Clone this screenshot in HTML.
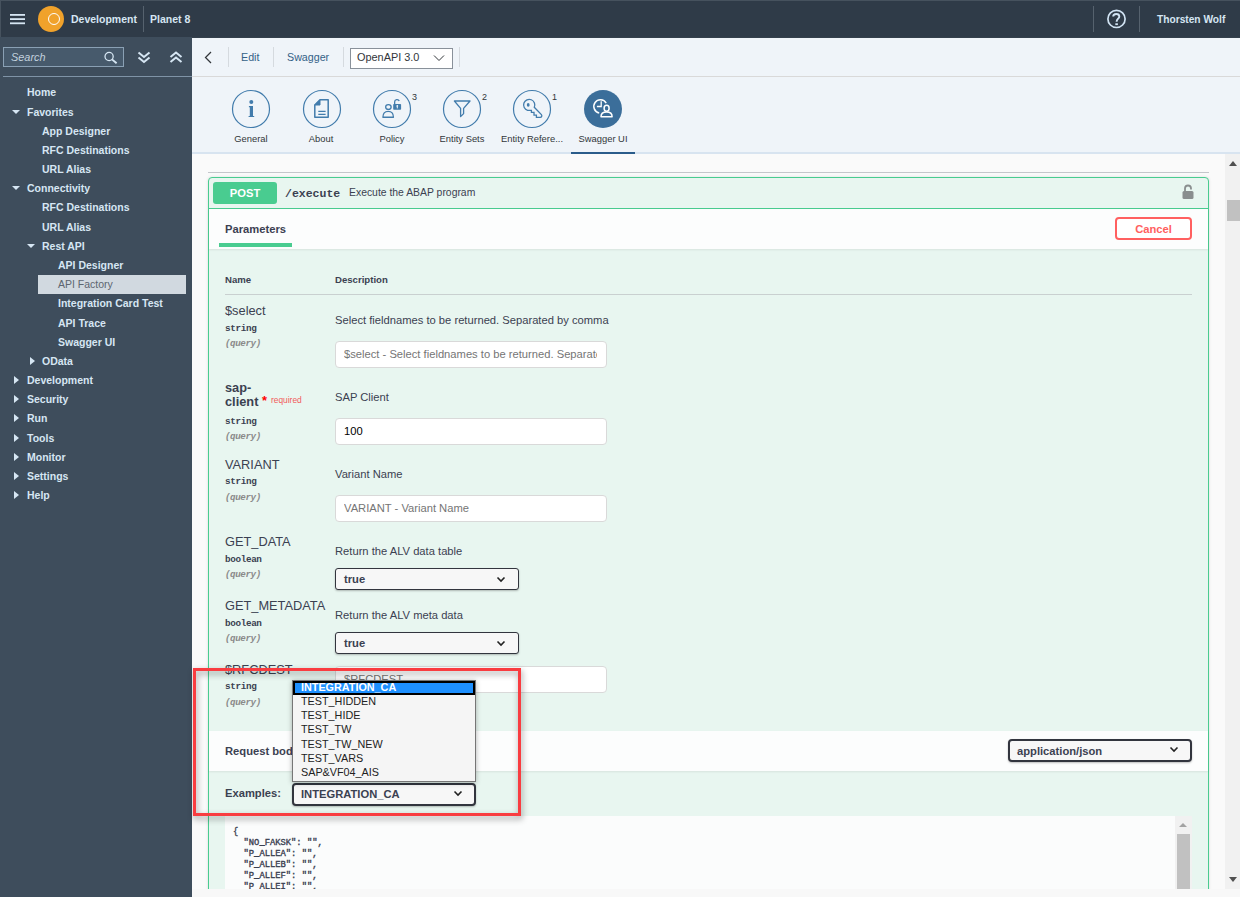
<!DOCTYPE html>
<html><head><meta charset="utf-8">
<style>
*{margin:0;padding:0;box-sizing:border-box}
html,body{width:1240px;height:897px;overflow:hidden;background:#fafafa;font-family:"Liberation Sans",sans-serif}
.a{position:absolute;white-space:nowrap}
#hdr{position:absolute;left:0;top:0;width:1240px;height:37px;background:#2f3b48;border-top:1px solid #46525e}
#side{position:absolute;left:0;top:37px;width:192px;height:860px;background:#3e4d5c}
.hw{color:#d6e6f3;font-size:10.5px;font-weight:bold}
.sep{position:absolute;width:1px;background:#56626e}
.tr{color:#d6e6f3;font-size:10.5px;font-weight:bold;line-height:19px;height:19px}
.tri-d{position:absolute;width:0;height:0;border-left:4.7px solid transparent;border-right:4.7px solid transparent;border-top:4.5px solid #d6e6f3}
.tri-r{position:absolute;width:0;height:0;border-top:4px solid transparent;border-bottom:4px solid transparent;border-left:5.5px solid #d6e6f3}
#tb{position:absolute;left:192px;top:37px;width:1048px;height:117px;background:#eff4f9}
.tsep{position:absolute;width:1px;background:#d5dadf;top:47px;height:20px}
.tab{position:absolute;top:90px;width:38px;height:38px;border:1px solid #427cac;border-radius:50%}
.tlab{position:absolute;top:133px;font-size:9.4px;color:#32363a;text-align:center;width:80px}
.badge{position:absolute;top:92px;font-size:9px;color:#32363a}
.sw{color:#3b4151}
.pn{font-size:12.8px;color:#3b4151}
.pt{font-family:"Liberation Mono",monospace;font-size:9.3px;letter-spacing:-0.35px;font-weight:bold;color:#3b4151}
.pq{font-family:"Liberation Mono",monospace;font-size:9.2px;letter-spacing:-0.4px;font-style:italic;font-weight:bold;color:#8a8a8a}
.pd{font-size:11.2px;color:#3b4151}
.inp{position:absolute;left:335px;width:272px;height:27px;background:#fff;border:1px solid #d9d9d9;border-radius:4px}
.sel{position:absolute;background:#f7f7f7;border:2px solid #32353e;border-radius:4px;box-shadow:0 1px 2px rgba(0,0,0,.25)}
</style></head><body>

<!-- header -->
<div id="hdr"></div>
<div class="a" style="left:0;top:0;width:1px;height:37px;background:#46525e"></div>
<svg class="a" style="left:10px;top:13px" width="15" height="12" viewBox="0 0 15 12"><rect x="0" y="1" width="15" height="1.8" fill="#d6e6f3"/><rect x="0" y="5.2" width="15" height="1.8" fill="#d6e6f3"/><rect x="0" y="9.4" width="15" height="1.8" fill="#d6e6f3"/></svg>
<div class="a" style="left:38px;top:6px;width:26px;height:26px;border-radius:50%;background:#f0a22b"></div>
<div class="a" style="left:48px;top:13px;width:12px;height:12px;border-radius:50%;border:1px solid #fff"></div>
<div class="a hw" style="left:71px;top:13px">Development</div>
<div class="sep" style="left:143px;top:6px;height:26px"></div>
<div class="a hw" style="left:150px;top:13px">Planet 8</div>
<div class="sep" style="left:1093px;top:6px;height:26px"></div>
<svg class="a" style="left:1106px;top:9px" width="21" height="21" viewBox="0 0 21 21"><circle cx="10.5" cy="9.9" r="8.6" fill="none" stroke="#d1e3f3" stroke-width="1.7"/><path d="M7.2 7.6 C7.2 5.8 8.5 5 10.3 5 C12.1 5 13.3 6.1 13.3 7.5 C13.3 9.6 10.6 9.9 10.6 12.8" fill="none" stroke="#d1e3f3" stroke-width="1.9"/><rect x="9.3" y="14.3" width="2.6" height="1.8" fill="#d1e3f3"/></svg>
<div class="sep" style="left:1139px;top:6px;height:26px"></div>
<div class="a hw" style="left:1157px;top:14px;font-size:10.2px">Thorsten Wolf</div>

<!-- sidebar -->
<div id="side"></div>
<div class="a" style="left:3px;top:47px;width:121px;height:20px;background:#475a6c;border:1px solid #8aa0b4"></div>
<div class="a" style="left:11px;top:51px;font-size:10.9px;font-style:italic;color:#c3d2df">Search</div>
<svg class="a" style="left:104px;top:50px" width="14" height="14" viewBox="0 0 14 14"><circle cx="5.1" cy="6.5" r="4.1" fill="none" stroke="#d6e6f3" stroke-width="1.3"/><line x1="8" y1="9.4" x2="12.6" y2="13.3" stroke="#d6e6f3" stroke-width="1.9"/></svg>
<svg class="a" style="left:137px;top:51px" width="14" height="13" viewBox="0 0 14 13"><polyline points="1.5,1.5 7,6 12.5,1.5" fill="none" stroke="#d6e6f3" stroke-width="2"/><polyline points="1.5,6.5 7,11 12.5,6.5" fill="none" stroke="#d6e6f3" stroke-width="2"/></svg>
<svg class="a" style="left:169px;top:51px" width="14" height="13" viewBox="0 0 14 13"><polyline points="1.5,6 7,1.5 12.5,6" fill="none" stroke="#d6e6f3" stroke-width="2"/><polyline points="1.5,11 7,6.5 12.5,11" fill="none" stroke="#d6e6f3" stroke-width="2"/></svg>
<div class="a" style="left:3px;top:76px;width:189px;height:1px;background:#7f93a6"></div>
<!-- tree -->
<div class="a tr" style="left:27px;top:83.46px">Home</div>
<div class="tri-d" style="left:11.7px;top:109.5px"></div>
<div class="a tr" style="left:27px;top:102.63px">Favorites</div>
<div class="a tr" style="left:42px;top:121.80px">App Designer</div>
<div class="a tr" style="left:42px;top:140.97px">RFC Destinations</div>
<div class="a tr" style="left:42px;top:160.14px">URL Alias</div>
<div class="tri-d" style="left:11.7px;top:186.1px"></div>
<div class="a tr" style="left:27px;top:179.31px">Connectivity</div>
<div class="a tr" style="left:42px;top:198.48px">RFC Destinations</div>
<div class="a tr" style="left:42px;top:217.65px">URL Alias</div>
<div class="tri-d" style="left:26.7px;top:243.7px"></div>
<div class="a tr" style="left:42px;top:236.82px">Rest API</div>
<div class="a tr" style="left:58px;top:255.99px">API Designer</div>
<div class="a" style="left:38px;top:275px;width:148px;height:19px;background:#d1d9e0"></div>
<div class="a tr" style="left:58px;top:275.16px;font-weight:normal;color:#5d6670">API Factory</div>
<div class="a tr" style="left:58px;top:294.33px">Integration Card Test</div>
<div class="a tr" style="left:58px;top:313.50px">API Trace</div>
<div class="a tr" style="left:58px;top:332.67px">Swagger UI</div>
<div class="tri-r" style="left:30px;top:356.8px"></div>
<div class="a tr" style="left:42px;top:351.84px">OData</div>
<div class="tri-r" style="left:14px;top:375.9px"></div>
<div class="a tr" style="left:27px;top:371.01px">Development</div>
<div class="tri-r" style="left:14px;top:395.1px"></div>
<div class="a tr" style="left:27px;top:390.18px">Security</div>
<div class="tri-r" style="left:14px;top:414.3px"></div>
<div class="a tr" style="left:27px;top:409.35px">Run</div>
<div class="tri-r" style="left:14px;top:433.5px"></div>
<div class="a tr" style="left:27px;top:428.52px">Tools</div>
<div class="tri-r" style="left:14px;top:452.6px"></div>
<div class="a tr" style="left:27px;top:447.69px">Monitor</div>
<div class="tri-r" style="left:14px;top:471.8px"></div>
<div class="a tr" style="left:27px;top:466.86px">Settings</div>
<div class="tri-r" style="left:14px;top:491.0px"></div>
<div class="a tr" style="left:27px;top:486.03px">Help</div>

<!-- toolbar -->
<div id="tb"></div>
<div class="a" style="left:192px;top:37px;width:1048px;height:1px;background:#34404c"></div>
<div class="a" style="left:192px;top:76px;width:1048px;height:1px;background:#d9d9d9"></div>
<svg class="a" style="left:203px;top:51px" width="10" height="13" viewBox="0 0 10 13"><polyline points="8,1 2.5,6.5 8,12" fill="none" stroke="#32363a" stroke-width="1.25"/></svg>
<div class="tsep" style="left:228px"></div>
<div class="a" style="left:241px;top:51px;font-size:10.7px;color:#346187">Edit</div>
<div class="tsep" style="left:273px"></div>
<div class="a" style="left:287px;top:51px;font-size:10.7px;color:#346187">Swagger</div>
<div class="tsep" style="left:343px"></div>
<div class="a" style="left:350px;top:48px;width:103px;height:21px;background:#fff;border:1px solid #89919a"></div>
<div class="a" style="left:357px;top:51px;font-size:10.9px;color:#32363a">OpenAPI 3.0</div>
<svg class="a" style="left:433px;top:54px" width="12" height="8" viewBox="0 0 12 8"><polyline points="1,1.5 6,6.5 11,1.5" fill="none" stroke="#32363a" stroke-width="1"/></svg>
<div class="tsep" style="left:459px"></div>

<svg class="a" style="left:231px;top:89px" width="40" height="40" viewBox="0 0 40 40"><circle cx="20" cy="20" r="18.5" fill="none" stroke="#427cac" stroke-width="1.2"/><circle cx="20.3" cy="13" r="2" fill="#427cac"/><path d="M17.9 17 H22 V26.9 H23.2 V28.1 H17.6 V26.9 H18.8 V18.2 H17.9 Z" fill="#427cac"/></svg>
<div class="tlab" style="left:211px">General</div>
<svg class="a" style="left:301.5px;top:89px" width="40" height="40" viewBox="0 0 40 40"><circle cx="20" cy="20" r="18.5" fill="none" stroke="#427cac" stroke-width="1.2"/><path d="M18 10.8 H26.2 V28.3 H12.8 V16 Z" fill="none" stroke="#427cac" stroke-width="1.5" stroke-linejoin="round"/><path d="M12.8 16 L18 10.8 V16 Z" fill="#427cac" stroke="#427cac" stroke-width="1"/><path d="M16.3 22.4 H23.6 M16.3 25.4 H23.6" stroke="#427cac" stroke-width="1.2"/></svg>
<div class="tlab" style="left:281px">About</div>
<svg class="a" style="left:372px;top:89px" width="40" height="40" viewBox="0 0 40 40"><circle cx="20" cy="20" r="18.5" fill="none" stroke="#427cac" stroke-width="1.2"/><ellipse cx="16.4" cy="18" rx="2.75" ry="2.45" fill="none" stroke="#427cac" stroke-width="1.3"/><path d="M10.9 28.25 C10.9 24 13.3 22.3 16.2 22.3 C19.1 22.3 21.45 24 21.45 28.25 Z" fill="none" stroke="#427cac" stroke-width="1.3" stroke-linejoin="round"/><path d="M22.65 15.3 V13 A2.35 2.35 0 0 1 27.2 12.1" fill="none" stroke="#427cac" stroke-width="1.3"/><rect x="21.2" y="15" width="7.9" height="5.7" rx="0.8" fill="#427cac"/><circle cx="25.3" cy="16.9" r="0.9" fill="#eff4f9"/><rect x="24.8" y="17.2" width="1" height="2.2" fill="#eff4f9"/></svg>
<div class="tlab" style="left:352px">Policy</div>
<div class="badge" style="left:412px">3</div>
<svg class="a" style="left:442px;top:89px" width="40" height="40" viewBox="0 0 40 40"><circle cx="20" cy="20" r="18.5" fill="none" stroke="#427cac" stroke-width="1.2"/><path d="M12.4 12 H28 L21.6 19.4 V24.6 L18.6 27.6 V19.4 Z" fill="none" stroke="#427cac" stroke-width="1.3" stroke-linejoin="round"/></svg>
<div class="tlab" style="left:422px">Entity Sets</div>
<div class="badge" style="left:482px">2</div>
<svg class="a" style="left:512px;top:89px" width="40" height="40" viewBox="0 0 40 40"><circle cx="20" cy="20" r="18.5" fill="none" stroke="#427cac" stroke-width="1.2"/><path d="M22.3 18.3 A5.6 5.6 0 1 0 15.6 21.3 L19.4 21.3 L19.4 23.4 L22 23.4 L22 26.2 L24.4 26.2 L24.4 28.4 L28.2 28.4 A1.7 1.7 0 0 0 29.4 25.6 Z" fill="none" stroke="#427cac" stroke-width="1.3" stroke-linejoin="miter"/><ellipse cx="16.2" cy="15.9" rx="1.4" ry="1.8" fill="#427cac"/></svg>
<div class="tlab" style="left:492px">Entity Refere...</div>
<div class="badge" style="left:552px">1</div>
<svg class="a" style="left:583px;top:89px" width="40" height="40" viewBox="0 0 40 40"><circle cx="20" cy="20" r="19" fill="#3b6e9a"/><path d="M23.2 14.2 A6.6 6.6 0 1 0 16.2 23.9" fill="none" stroke="#fff" stroke-width="1.5"/><path d="M18.2 12.2 V17.5 H13.9" fill="none" stroke="#fff" stroke-width="1.3"/><ellipse cx="23.6" cy="19.2" rx="2.5" ry="3" fill="none" stroke="#fff" stroke-width="1.5"/><path d="M18 27.7 C18 24.6 20.4 23 23.6 23 C26.8 23 29.1 24.6 29.1 27.7 Z" fill="none" stroke="#fff" stroke-width="1.5" stroke-linejoin="round"/></svg>
<div class="tlab" style="left:563px">Swagger UI</div>
<div class="a" style="left:192px;top:152px;width:1048px;height:2px;background:#d8e4f0"></div>
<div class="a" style="left:571px;top:152px;width:64px;height:2px;background:#2b5c8a"></div>

<!-- swagger -->

<div class="a" style="left:192px;top:154px;width:1033px;height:735px;background:#fafafa"></div>
<!-- main scrollbar -->
<div class="a" style="left:1225px;top:154px;width:15px;height:735px;background:#f1f1f1"></div>
<div class="a" style="left:1229px;top:161px;width:0;height:0;border-left:4.5px solid transparent;border-right:4.5px solid transparent;border-bottom:5px solid #505050"></div>
<div class="a" style="left:1227px;top:200px;width:13px;height:21px;background:#c1c1c1"></div>
<div class="a" style="left:1229px;top:877px;width:0;height:0;border-left:4.5px solid transparent;border-right:4.5px solid transparent;border-top:5px solid #505050"></div>

<div class="a" style="left:208px;top:172px;width:1001px;height:1px;background:#c4c6cb"></div>
<!-- opblock -->
<div class="a" style="left:208px;top:177px;width:1001px;height:740px;border:1px solid #49cc90;border-radius:4px;background:#e8f6f0;box-shadow:0 0 3px rgba(0,0,0,.12)"></div>
<div class="a" style="left:209px;top:208px;width:999px;height:1px;background:#49cc90"></div>
<div class="a" style="left:213px;top:182px;width:64px;height:22px;background:#49cc90;border-radius:3px"></div>
<div class="a" style="left:213px;top:187px;width:64px;text-align:center;font-size:11.2px;font-weight:bold;color:#fff">POST</div>
<div class="a sw" style="left:285px;top:187px;font-family:'Liberation Mono',monospace;font-size:11.5px;font-weight:bold">/execute</div>
<div class="a sw" style="left:349px;top:187px;font-size:10.4px">Execute the ABAP program</div>
<svg class="a" style="left:1181px;top:184px" width="14" height="16" viewBox="0 0 14 16"><path d="M4 7 V4.5 A3 3 0 0 1 10 4.5 V5.5" fill="none" stroke="#898e8e" stroke-width="1.8"/><rect x="1.5" y="7" width="11" height="8" rx="1.5" fill="#898e8e"/></svg>

<!-- tab header -->
<div class="a" style="left:209px;top:209px;width:999px;height:40px;background:#fcfdfd;box-shadow:0 1px 2px rgba(0,0,0,.08)"></div>
<div class="a sw" style="left:225px;top:223px;font-size:11.2px;font-weight:bold">Parameters</div>
<div class="a" style="left:219px;top:243px;width:73px;height:4px;background:#49cc90"></div>
<div class="a" style="left:1115px;top:217px;width:77px;height:23px;border:2px solid #ff6060;border-radius:4px;background:#fff"></div>
<div class="a" style="left:1115px;top:223px;width:77px;text-align:center;font-size:11.2px;font-weight:bold;color:#ff6060">Cancel</div>

<!-- params table -->
<div class="a sw" style="left:225px;top:274px;font-size:9.6px;font-weight:bold">Name</div>
<div class="a sw" style="left:335px;top:274px;font-size:9.6px;font-weight:bold">Description</div>
<div class="a" style="left:225px;top:294px;width:967px;height:1px;background:#c9d0d0"></div>
<div class="a pn" style="left:225px;top:303.3px">$select</div>
<div class="a pt" style="left:225px;top:322.7px">string</div>
<div class="a pq" style="left:225px;top:338.4px">(query)</div>
<div class="a pd" style="left:335px;top:313.6px">Select fieldnames to be returned. Separated by comma</div>
<div class="inp" style="top:341px"></div>
<div class="a" style="left:344px;top:348px;width:253px;overflow:hidden;font-size:11.2px;color:#757575">$select - Select fieldnames to be returned. Separated by comma</div>
<div class="a sw" style="left:225px;top:380.5px;font-size:12.8px;font-weight:bold;line-height:14.8px">sap-<br>client</div>
<div class="a" style="left:262px;top:393px;font-size:12.8px;font-weight:bold;color:#ff0000">*</div>
<div class="a" style="left:271px;top:394.5px;font-size:8.4px;color:#f25a5a">required</div>
<div class="a pt" style="left:225px;top:415.5px">string</div>
<div class="a pq" style="left:225px;top:431.2px">(query)</div>
<div class="a pd" style="left:335px;top:391.2px">SAP Client</div>
<div class="inp" style="top:418px"></div>
<div class="a" style="left:344px;top:425px;width:253px;overflow:hidden;font-size:11.2px;color:#000">100</div>
<div class="a pn" style="left:225px;top:456.6px">VARIANT</div>
<div class="a pt" style="left:225px;top:476.0px">string</div>
<div class="a pq" style="left:225px;top:491.7px">(query)</div>
<div class="a pd" style="left:335px;top:468.0px">Variant Name</div>
<div class="inp" style="top:495px"></div>
<div class="a" style="left:344px;top:502px;width:253px;overflow:hidden;font-size:11.2px;color:#757575">VARIANT - Variant Name</div>
<div class="a pn" style="left:225px;top:534.3px">GET_DATA</div>
<div class="a pt" style="left:225px;top:553.7px">boolean</div>
<div class="a pq" style="left:225px;top:569.4px">(query)</div>
<div class="a pd" style="left:335px;top:545.1px">Return the ALV data table</div>
<div class="sel" style="left:335px;top:568px;width:184px;height:22px;border-width:1px;border-radius:3px"></div>
<div class="a sw" style="left:344px;top:573px;font-size:11.2px;font-weight:bold">true</div>
<svg class="a" style="left:496px;top:576px" width="10" height="7" viewBox="0 0 10 7"><polyline points="1.5,1.5 5,5 8.5,1.5" fill="none" stroke="#222" stroke-width="1.6"/></svg>
<div class="a pn" style="left:225px;top:598.3px">GET_METADATA</div>
<div class="a pt" style="left:225px;top:617.7px">boolean</div>
<div class="a pq" style="left:225px;top:633.4px">(query)</div>
<div class="a pd" style="left:335px;top:608.8px">Return the ALV meta data</div>
<div class="sel" style="left:335px;top:632px;width:184px;height:22px;border-width:1px;border-radius:3px"></div>
<div class="a sw" style="left:344px;top:637px;font-size:11.2px;font-weight:bold">true</div>
<svg class="a" style="left:496px;top:640px" width="10" height="7" viewBox="0 0 10 7"><polyline points="1.5,1.5 5,5 8.5,1.5" fill="none" stroke="#222" stroke-width="1.6"/></svg>
<div class="a pn" style="left:225px;top:661.5px">$RFCDEST</div>
<div class="a pt" style="left:225px;top:680.9px">string</div>
<div class="a pq" style="left:225px;top:696.6px">(query)</div>
<div class="inp" style="top:666px"></div>
<div class="a" style="left:344px;top:673px;width:253px;overflow:hidden;font-size:11.2px;color:#757575">$RFCDEST</div>
<!-- request body -->
<div class="a" style="left:209px;top:731px;width:999px;height:40px;background:#fcfdfd;box-shadow:0 1px 2px rgba(0,0,0,.08)"></div>
<div class="a sw" style="left:225px;top:745px;font-size:11.2px;font-weight:bold">Request body</div>
<div class="sel" style="left:1008px;top:739px;width:184px;height:23px"></div>
<div class="a sw" style="left:1017px;top:745px;font-size:11.2px;font-weight:bold">application/json</div>
<svg class="a" style="left:1169px;top:746px" width="10" height="7" viewBox="0 0 10 7"><polyline points="1.5,1.5 5,5 8.5,1.5" fill="none" stroke="#222" stroke-width="1.6"/></svg>

<div class="a sw" style="left:225px;top:787px;font-size:11.2px;font-weight:bold">Examples:</div>
<div class="sel" style="left:292px;top:783px;width:184px;height:23px"></div>
<div class="a sw" style="left:301px;top:788px;font-size:11.2px;font-weight:bold">INTEGRATION_CA</div>
<svg class="a" style="left:453px;top:790px" width="10" height="7" viewBox="0 0 10 7"><polyline points="1.5,1.5 5,5 8.5,1.5" fill="none" stroke="#222" stroke-width="1.6"/></svg>

<!-- textarea -->
<div class="a" style="left:225px;top:816px;width:967px;height:73px;background:#fbfcfc"></div>
<div class="a" style="left:1175px;top:816px;width:17px;height:73px;background:#f1f1f1"></div>
<div class="a" style="left:1179px;top:823px;width:0;height:0;border-left:4px solid transparent;border-right:4px solid transparent;border-bottom:4px solid #a3a3a3"></div>
<div class="a" style="left:1177px;top:834px;width:13px;height:55px;background:#c1c1c1"></div>
<pre class="a sw" style="white-space:pre;left:233px;top:827px;font-family:'Liberation Mono',monospace;font-size:8.8px;font-weight:normal;-webkit-text-stroke:0.35px #3b4151;line-height:11px">{
  "NO_FAKSK": "",
  "P_ALLEA": "",
  "P_ALLEB": "",
  "P_ALLEF": "",
  "P_ALLEI": "",</pre>

<!-- red annotation -->
<div class="a" style="left:193px;top:668px;width:328px;height:148px;border:3px solid #f93c40;filter:drop-shadow(1px 3px 3px rgba(0,0,0,.4))"></div>

<!-- dropdown -->
<div class="a" style="left:292px;top:680px;width:184px;height:102px;background:#f5f5f5;border:1px solid #767676;box-shadow:0 1px 5px rgba(0,0,0,.3)"></div>
<div class="a" style="left:293px;top:681px;width:182px;height:14px;background:#1e90ff;border:2px solid #000"></div>
<div class="a" style="left:301px;top:680px;font-size:10.8px;line-height:14.15px;color:#222">
<div style="color:#fff;font-weight:bold">INTEGRATION_CA</div><div>TEST_HIDDEN</div><div>TEST_HIDE</div><div>TEST_TW</div><div>TEST_TW_NEW</div><div>TEST_VARS</div><div>SAP&amp;VF04_AIS</div></div>


<div class="a" style="left:192px;top:889px;width:1048px;height:8px;background:#f8f8f8"></div>
</body></html>
